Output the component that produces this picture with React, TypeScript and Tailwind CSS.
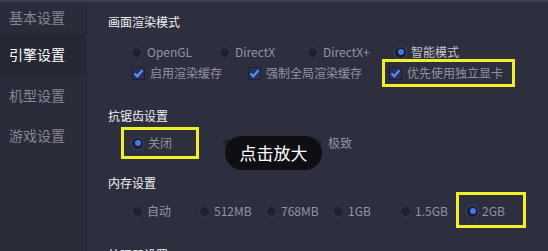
import React, { FC } from "react";

const FONT = { fontFamily: '"Noto Sans CJK SC", "Noto Sans", sans-serif' };

const Radio: FC<{ on?: boolean }> = ({ on }) =>
  on ? (
    <span className="flex h-[11px] w-[11px] shrink-0 items-center justify-center rounded-full bg-[#1b1c26] shadow-[0_0_2px_#4a6fd0]">
      <span className="h-[6px] w-[6px] rounded-full bg-[#3d78ee]" />
    </span>
  ) : (
    <span className="h-[11px] w-[11px] shrink-0 rounded-full border border-[#363747] bg-[#20212b]" />
  );

const Check: FC = () => (
  <span className="flex h-[13px] w-[13px] shrink-0 items-center justify-center bg-[#2a2e58] border border-[#1f2036]">
    <svg width="11" height="11" viewBox="0 0 11 11">
      <path d="M1.5 5.5 L4.3 8.3 L9.5 2.2" stroke="#4f92f6" strokeWidth="2.2" fill="none" />
    </svg>
  </span>
);

const Hl: FC<{ className: string }> = ({ className }) => (
  <span className={"pointer-events-none absolute border-[3px] border-[#f1ee2c] " + className} />
);

const Heading: FC<{ children: React.ReactNode; className?: string }> = ({ children, className }) => (
  <div className={"h-[16px] text-[12px] leading-[16px] text-[#f0f0f2] " + (className ?? "")}>{children}</div>
);

const sidebar = [
  { label: "基本设置", h: "h-[31px]" },
  { label: "引擎设置", h: "h-[42px]", active: true },
  { label: "机型设置", h: "h-[40px]" },
  { label: "游戏设置", h: "h-[40px]" },
];

export default function App() {
  return (
    <div
      className="relative flex h-[251px] w-[548px] overflow-hidden border-t-2 border-[#3d3e4d] bg-[#2e2f3e]"
      style={FONT}
    >
      <div className="flex w-[87px] shrink-0 flex-col border-r border-[#262733] bg-[#2b2c3a]">
        {sidebar.map((s) => (
          <div
            key={s.label}
            className={`${s.h} flex items-center pl-[9px] text-[14px] ${
              s.active ? "bg-[#262734] text-white" : "text-[#858693]"
            }`}
          >
            {s.label}
          </div>
        ))}
      </div>

      <div className="flex flex-1 flex-col pl-[21px] pt-[12px] text-[12px] text-[#9293a0]">
        <Heading>画面渲染模式</Heading>
        <div className="mt-[13px] flex h-[20px] items-center pl-[23px]">
          {["OpenGL", "DirectX", "DirectX+", "智能模式"].map((t, i) => (
            <div key={t} className="flex w-[88px] items-center gap-[5px]">
              <Radio on={i === 3} />
              <span className={i === 3 ? "text-[#c4c5cf]" : ""}>{t}</span>
            </div>
          ))}
        </div>
        <div className="mt-[3px] flex h-[20px] items-center pl-[24px]">
          <div className="flex w-[116px] items-center gap-[5px]">
            <Check />
            <span>启用渲染缓存</span>
          </div>
          <div className="flex w-[141px] items-center gap-[5px]">
            <Check />
            <span>强制全局渲染缓存</span>
          </div>
          <div className="relative flex items-center gap-[5px]">
            <Check />
            <span>优先使用独立显卡</span>
            <Hl className="left-[-7px] top-[-5px] h-[28px] w-[133px]" />
          </div>
        </div>

        <Heading className="mt-[26px]">抗锯齿设置</Heading>
        <div className="mt-[9px] flex h-[20px] items-center pl-[24px]">
          {["关闭", "均衡", "极致"].map((t, i) => (
            <div key={t} className="relative flex h-[20px] w-[90px] items-center gap-[5px]">
              <Radio on={i === 0} />
              <span>{t}</span>
              {i === 0 && <Hl className="left-[-11px] top-[-6px] h-[32px] w-[78px]" />}
            </div>
          ))}
        </div>

        <Heading className="mt-[22px]">内存设置</Heading>
        <div className="mt-[10px] flex h-[20px] items-center pl-[24px]">
          {["自动", "512MB", "768MB", "1GB", "1.5GB", "2GB"].map((t, i) => (
            <div key={t} className="relative flex h-[20px] w-[67px] items-center gap-[4px]">
              <Radio on={i === 5} />
              <span>{t}</span>
              {i === 5 && <Hl className="left-[-11px] top-[-9px] h-[36px] w-[70px]" />}
            </div>
          ))}
        </div>

        <Heading className="mt-[26px]">处理器设置</Heading>
      </div>

      <div className="absolute left-[225px] top-[134px] flex h-[34px] w-[97px] items-center justify-center rounded-full bg-[#0e0e13] text-[17px] text-white">
        点击放大
      </div>
    </div>
  );
}
